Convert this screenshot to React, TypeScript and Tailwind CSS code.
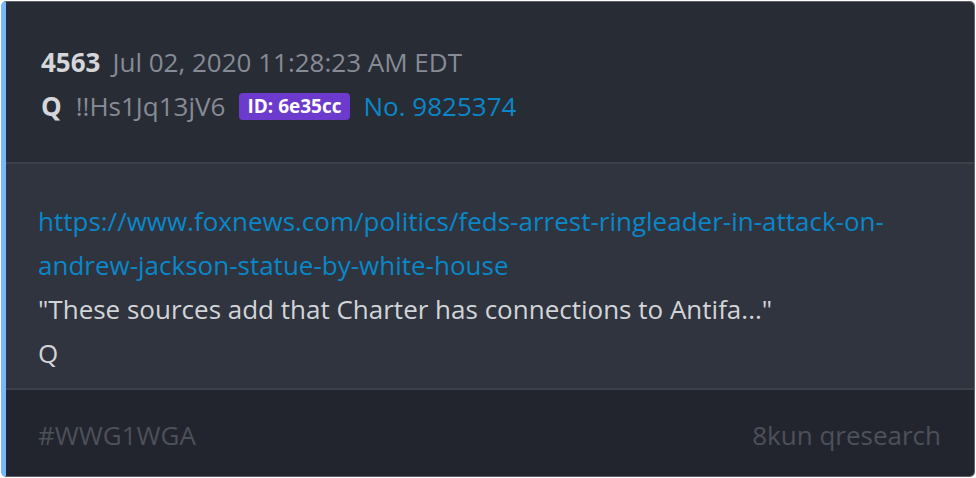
import React from "react";

export default function App() {
  return (
    <div className="w-[976px] h-[478px] bg-white p-[1px] font-['Open_Sans',sans-serif]">
      <div className="h-full flex flex-col overflow-hidden rounded-[5px] border border-[#5d626b] border-l-[5px] border-l-[#7ab7ff]">
        <div className="bg-[#282c35] pl-[35px] pr-[32px] pt-[38px] pb-[34px] text-[26px] leading-[44px] border-b-2 border-[#3c4049]">
          <div className="flex items-center">
            <span className="font-bold text-[#d4d6da]">4563</span>
            <span className="ml-[12px] text-[#868b95]">Jul 02, 2020 11:28:23 AM EDT</span>
          </div>
          <div className="flex items-center">
            <span className="font-bold text-[#d4d6da]">Q</span>
            <span className="ml-[14px] text-[#868b95]">!!Hs1Jq13jV6</span>
            <span className="ml-[14px] bg-[#6c3bce] text-white font-bold text-[19px] leading-[27px] px-[8px] rounded-[4px]">
              ID: 6e35cc
            </span>
            <span className="ml-[14px] text-[#0a87c9]">No. 9825374</span>
          </div>
        </div>
        <div className="bg-[#2f343e] pl-[32px] pr-[32px] pt-[35px] pb-[13px] text-[26px] leading-[44px] border-b-2 border-[#3c4049]">
          <a className="text-[#0a87c9] block">
            https://www.foxnews.com/politics/feds-arrest-ringleader-in-attack-on-
            <br />
            andrew-jackson-statue-by-white-house
          </a>
          <p className="text-[#d2d4d8]">"These sources add that Charter has connections to Antifa..."</p>
          <p className="text-[#d2d4d8]">Q</p>
        </div>
        <div className="flex-1 bg-[#22252d] pl-[32px] pr-[33px] pt-[23px] text-[26px] leading-[44px] flex justify-between text-[#4c515a]">
          <span>#WWG1WGA</span>
          <span>8kun qresearch</span>
        </div>
      </div>
    </div>
  );
}
